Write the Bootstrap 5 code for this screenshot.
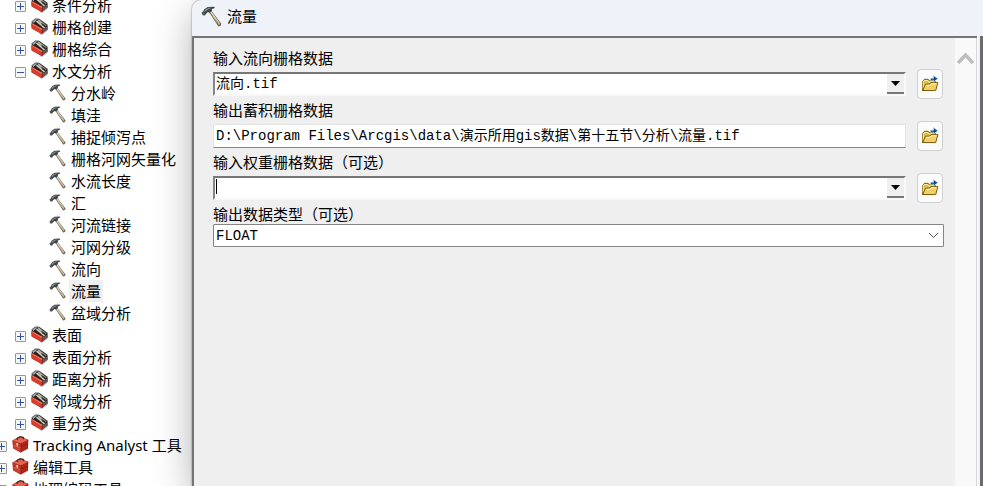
<!DOCTYPE html>
<html lang="zh-CN">
<head>
<meta charset="utf-8">
<meta name="viewport" content="width=device-width, initial-scale=1">
<title>流量</title>
<link rel="stylesheet" href="https://cdn.jsdelivr.net/npm/bootstrap@5.3.0/dist/css/bootstrap.min.css">
<style>
body{font-family:"Noto Sans","Noto Sans CJK SC",sans-serif;font-size:15px;line-height:22px;color:#000;background:#fff}
.tree-pane{width:192px}
.tree-list{margin:-6px 0 0 -4px}
.tree-list button{color:inherit}
.tree-item{height:22px;white-space:nowrap}
.level-1{padding-left:19px}
.level-2{padding-left:54px}
.expander{width:11px;height:11px;margin:3px 5px 0 0;border:1px solid #979797;background:#f6f6f6;border-radius:1px}
.expander svg{display:block;width:9px;height:9px}
.tree-icon{width:17px;height:17px;margin:0 2px 2px 0}
.level-2 .tree-icon{margin-left:-1px;margin-right:3px}
.tree-text{padding:0 2px}
.selected{background:#efefef}
.dialog-pane{border-top-left-radius:9px;background:#eff3f9;box-shadow:0 12px 38px rgba(0,0,0,.3),0 0 2px rgba(0,0,0,.5)}
.dialog-title{height:36px;padding:0 0 4px 9px}
.dialog-title h1{font-size:15px;line-height:22px;padding-left:5px}
.dialog-icon{width:21px;height:21px}
.dialog-body{border:solid #747474;border-width:2px 0 0 2px;background:#efefef}
.params{font-family:"Liberation Mono","Noto Sans CJK SC",monospace;padding:13px 11px 0 19px}
.params label{line-height:19px;font-size:15px}
.param-row{height:50px;margin-bottom:2px;padding-right:1px;gap:11px}
.param-field{padding-bottom:5px}
.params input,.params select{font-size:14px;line-height:18px;color:#000;background:#fff;outline:0;border-radius:0}
.combo,.path-box{margin-top:2px;height:24px}
.combo{border:2px solid;border-color:#777 #f8f8f8 #f8f8f8 #858585;background:#fff}
.combo input{padding:0 1px 1px;border:0}
.path-box{padding:0 2px 4px;border:1px solid;border-color:#e4e4e4 #e4e4e4 #858585}
.drop{width:17px;border:solid #777;border-width:0 0 2px;background:#efefef}
.caret-line{position:absolute;left:1px;top:1px;width:1px;height:15px;background:#000}
.browse{width:26px;height:30px;margin-bottom:2px;border:1px solid #cfcfcf;border-radius:4px;background:#fbfbfb}
.browse svg{width:18px;height:18px}
.type-label{margin-bottom:-2px}
.type-wrap select{height:23px;padding:0 24px 0 2px;border:1px solid #858585;border-radius:1px;appearance:none}
.type-wrap svg{position:absolute;right:5px;top:6px;width:11px;height:11px;pointer-events:none}
.scroll-track{width:22px;background:#f9f9f9;border-right:1px solid #d4d4d4;padding-top:12px}
.scroll-track button{height:16px;width:21px}
.frame-edge{width:6px;border:solid;border-width:0 3px 0 1px;border-color:#fff #6b6b6b #fff #fff}
</style>
<script src="https://cdn.jsdelivr.net/npm/bootstrap@5.3.0/dist/js/bootstrap.bundle.min.js"></script>
</head>
<body class="vh-100 overflow-hidden">
<svg class="d-none" aria-hidden="true">
  <symbol id="hammer" viewBox="0 0 17 17">
    <path d="M6 4.200 8 3.200l8.300 11-.3 1.800-1.900.6z" fill="#70685a"/>
    <path d="m7 4.400 1-.6L15.300 14l-.6 1.200z" fill="#e6dbb9"/>
    <path d="m9 8.500 1-.3 5.200 6-.6 1z" fill="#b9ab8c"/>
    <path d="m.4 5.500 1.500-1.200.7-1.600L5.500.8l5.100-.2.700 1-2.500.8.1 1.500-2 1.500-1.300-.5-1.300 1.200-1.200 1.500L1.400 7.500z" fill="#3f4446"/>
    <path d="m2.700 4 1.300-1.300 2.300-1.200 2.700-.1-2.400.8-2 1.200-1.500 1.500z" fill="#929a9b"/>
    <path d="m1 5.500.8-.5 1 1-.9.800z" fill="#70777a"/>
  </symbol>
  <symbol id="toolset" viewBox="0 0 17 17">
    <path d="m8 16 8.500-5.500v2.400L11 17z" fill="#aaa" opacity=".7"/>
    <path d="M.6 3.200 4.400.6l3.800.1 8.400 6.100.1 4.800-5.400 3.700L.8 8z" fill="#393b39"/>
    <path d="m1.100 3.300 3.300-2.100 2 .3-3 2.700-1 .9z" fill="#a0a39d"/>
    <path d="m6.400 1.700 1.700-.2 2.700 2.600 4.700 3.300-1 1.200-5.300-3.700z" fill="#b4b1a5"/>
    <path d="m4.900 3.400 1.700-.7 7.700 6.600-1.500 1z" fill="#d9cfb5"/>
    <path d="m2.800 4.800 1.500-.7 6.800 5.200-1 .6z" fill="#171d1e"/>
    <path d="m10.300 4.700 5.700 3.900-.1 2-5-3.500z" fill="#252a2a"/>
    <path d="m.4 5.700 1.200-.7 10.100 5.700.1 5-1.200.4L.6 10.500z" fill="#a9190f"/>
    <path d="m.5 6.300 10.200 5.400v4.100L.8 10.200z" fill="#dc3c29"/>
    <path d="m.5 6.100.9-.6 10.100 5.400-.8 1z" fill="#ef806c"/>
    <path d="m11.900 11.300 4.500-2.700v2.700l-4.500 4z" fill="#665952"/>
  </symbol>
  <symbol id="toolbox" viewBox="0 0 17 17">
    <path d="m1 13 7 3.500 8-4.200v1.400L8.500 17z" fill="#bbb" opacity=".6"/>
    <path d="m.4 4.600 7-4 9 3.100-.5 8.800-7.400 4L1 12.200z" fill="#8b160f"/>
    <path d="m.6 4.700 6.800-3.600 8.600 2.800L9 7.400z" fill="#e6644f"/>
    <path d="m.7 5.100 8.200 2.800-.2 3L1 7.800z" fill="#c43928"/>
    <path d="m1 8.500 7.700 3-.2 4.400L1.200 12z" fill="#cf3f2d"/>
    <path d="m9.500 7.800 6.300-3.300-.2 2.800-6.200 3.300zM9.400 11.300l6.200-3.200-.2 4.200-6.100 3.300z" fill="#ae281b"/>
    <path d="M5.200 4V2.400l3.300-1.700 3 .9v1.700" fill="none" stroke="#3e3430" stroke-width="1.300"/>
    <path d="m4.500 6.700 1.500.5v2.700l-1.500-.5z" fill="#f4dfcf"/>
    <path d="m1.400 8.900 6.900 2.700" stroke="#f0a18d" stroke-width=".5"/>
  </symbol>
  <symbol id="open" viewBox="0 0 18 18">
    <path d="M1.500 15.500v-9l1-1 .8-1.200h3.900l1 1.400h5.300l.7.800v3.200h1.900z" fill="#dfbc46" stroke="#795c0b"/>
    <path d="M2.200 14V6.800l1.500-1.300h3l1 1.400h5.500" fill="none" stroke="#fff0a3"/>
    <path d="m1.600 15.500 3-6.300 4.200-.2 1-1.400h7.100l-2.200 8z" fill="#f1cf68" stroke="#795c0b"/>
    <path d="m4.900 10.400 4.600-.2.900-1.400h5.200" fill="none" stroke="#fff4b6"/>
    <path d="M9.500 5.600V3.300h3V.6l4.300 3.200-4.300 3.100V5z" fill="#0b4d91" stroke="#dcecf6" stroke-width=".5"/>
  </symbol>
  <symbol id="plus" viewBox="0 0 9 9"><path d="M1 4h7v1H1zM4 1h1v7H4z" fill="#3453a0"/></symbol>
  <symbol id="minus" viewBox="0 0 9 9"><path d="M1 4h7v1H1z" fill="#3453a0"/></symbol>
</svg>
<div class="d-flex h-100">
  <nav class="tree-pane flex-shrink-0 overflow-hidden" aria-label="工具箱">
    <ul class="tree-list list-unstyled" id="toolTree"></ul>
  </nav>
  <main class="dialog-pane flex-grow-1 d-flex flex-column position-relative">
    <header class="dialog-title d-flex align-items-center">
      <svg class="dialog-icon"><use href="#hammer"/></svg>
      <h1 class="m-0 fw-normal">流量</h1>
    </header>
    <div class="d-flex flex-grow-1">
      <div class="dialog-body d-flex flex-grow-1">
        <form class="params flex-grow-1">
          <div class="param-row d-flex align-items-end">
            <div class="param-field flex-grow-1">
              <label class="d-block" for="direction">输入流向栅格数据</label>
              <div class="combo d-flex"><input class="w-100" id="direction" type="text" value="流向.tif"><button type="button" class="drop p-0 flex-shrink-0 d-flex align-items-center justify-content-center" aria-label="展开流向列表"><svg width="9" height="5"><path d="M0 0h9L4.500 5z"/></svg></button></div>
            </div>
            <button type="button" class="browse p-0 flex-shrink-0 d-flex align-items-center justify-content-center" aria-label="浏览流向栅格"><svg><use href="#open"/></svg></button>
          </div>
          <div class="param-row d-flex align-items-end">
            <div class="param-field flex-grow-1">
              <label class="d-block" for="output">输出蓄积栅格数据</label>
              <input class="path-box d-block w-100" id="output" type="text" value="D:\Program Files\Arcgis\data\演示所用gis数据\第十五节\分析\流量.tif">
            </div>
            <button type="button" class="browse p-0 flex-shrink-0 d-flex align-items-center justify-content-center" aria-label="浏览输出位置"><svg><use href="#open"/></svg></button>
          </div>
          <div class="param-row d-flex align-items-end">
            <div class="param-field flex-grow-1">
              <label class="d-block" for="weight">输入权重栅格数据（可选）</label>
              <div class="combo d-flex position-relative"><input class="w-100" id="weight" type="text"><span class="caret-line"></span><button type="button" class="drop p-0 flex-shrink-0 d-flex align-items-center justify-content-center" aria-label="展开权重列表"><svg width="9" height="5"><path d="M0 0h9L4.500 5z"/></svg></button></div>
            </div>
            <button type="button" class="browse p-0 flex-shrink-0 d-flex align-items-center justify-content-center" aria-label="浏览权重栅格"><svg><use href="#open"/></svg></button>
          </div>
          <label class="type-label d-block" for="dataType">输出数据类型（可选）</label>
          <div class="type-wrap position-relative">
            <select class="d-block w-100" id="dataType"><option>FLOAT</option><option>INTEGER</option></select>
            <svg viewBox="0 0 11 11"><path d="m1 3 4.500 4.500L10 3" fill="none" stroke="#555"/></svg>
          </div>
        </form>
        <div class="scroll-track flex-shrink-0">
          <button type="button" class="border-0 p-0 bg-transparent d-flex align-items-center justify-content-center" aria-label="向上滚动"><svg width="17" height="13"><path d="m1 11 7.500-8 7.500 8" fill="none" stroke="#bdbdbd" stroke-width="3.500"/></svg></button>
        </div>
      </div>
      <div class="frame-edge flex-shrink-0"></div>
    </div>
  </main>
</div>
<script>
const items = [
  [1,'条件分析'],[1,'栅格创建'],[1,'栅格综合'],[1,'水文分析',true],
  [2,'分水岭'],[2,'填洼'],[2,'捕捉倾泻点'],[2,'栅格河网矢量化'],[2,'水流长度'],[2,'汇'],[2,'河流链接'],[2,'河网分级'],[2,'流向'],[2,'流量',true],[2,'盆域分析'],
  [1,'表面'],[1,'表面分析'],[1,'距离分析'],[1,'邻域分析'],[1,'重分类'],
  [0,'Tracking Analyst 工具'],[0,'编辑工具'],[0,'地理编码工具']
];
const icons = ['toolbox','toolset','hammer'];
document.getElementById('toolTree').innerHTML = items.map(([level,name,active]) => {
  const toggle = level < 2 ? `<button type="button" class="expander p-0 flex-shrink-0" aria-label="${active ? '折叠' : '展开'}${name}"><svg><use href="#${active ? 'minus' : 'plus'}"/></svg></button>` : '';
  return `<li class="tree-item level-${level} d-flex align-items-center">${toggle}<svg class="tree-icon flex-shrink-0"><use href="#${icons[level]}"/></svg><span class="tree-text${level === 2 && active ? ' selected' : ''}">${name}</span></li>`;
}).join('');
</script>
</body>
</html>
